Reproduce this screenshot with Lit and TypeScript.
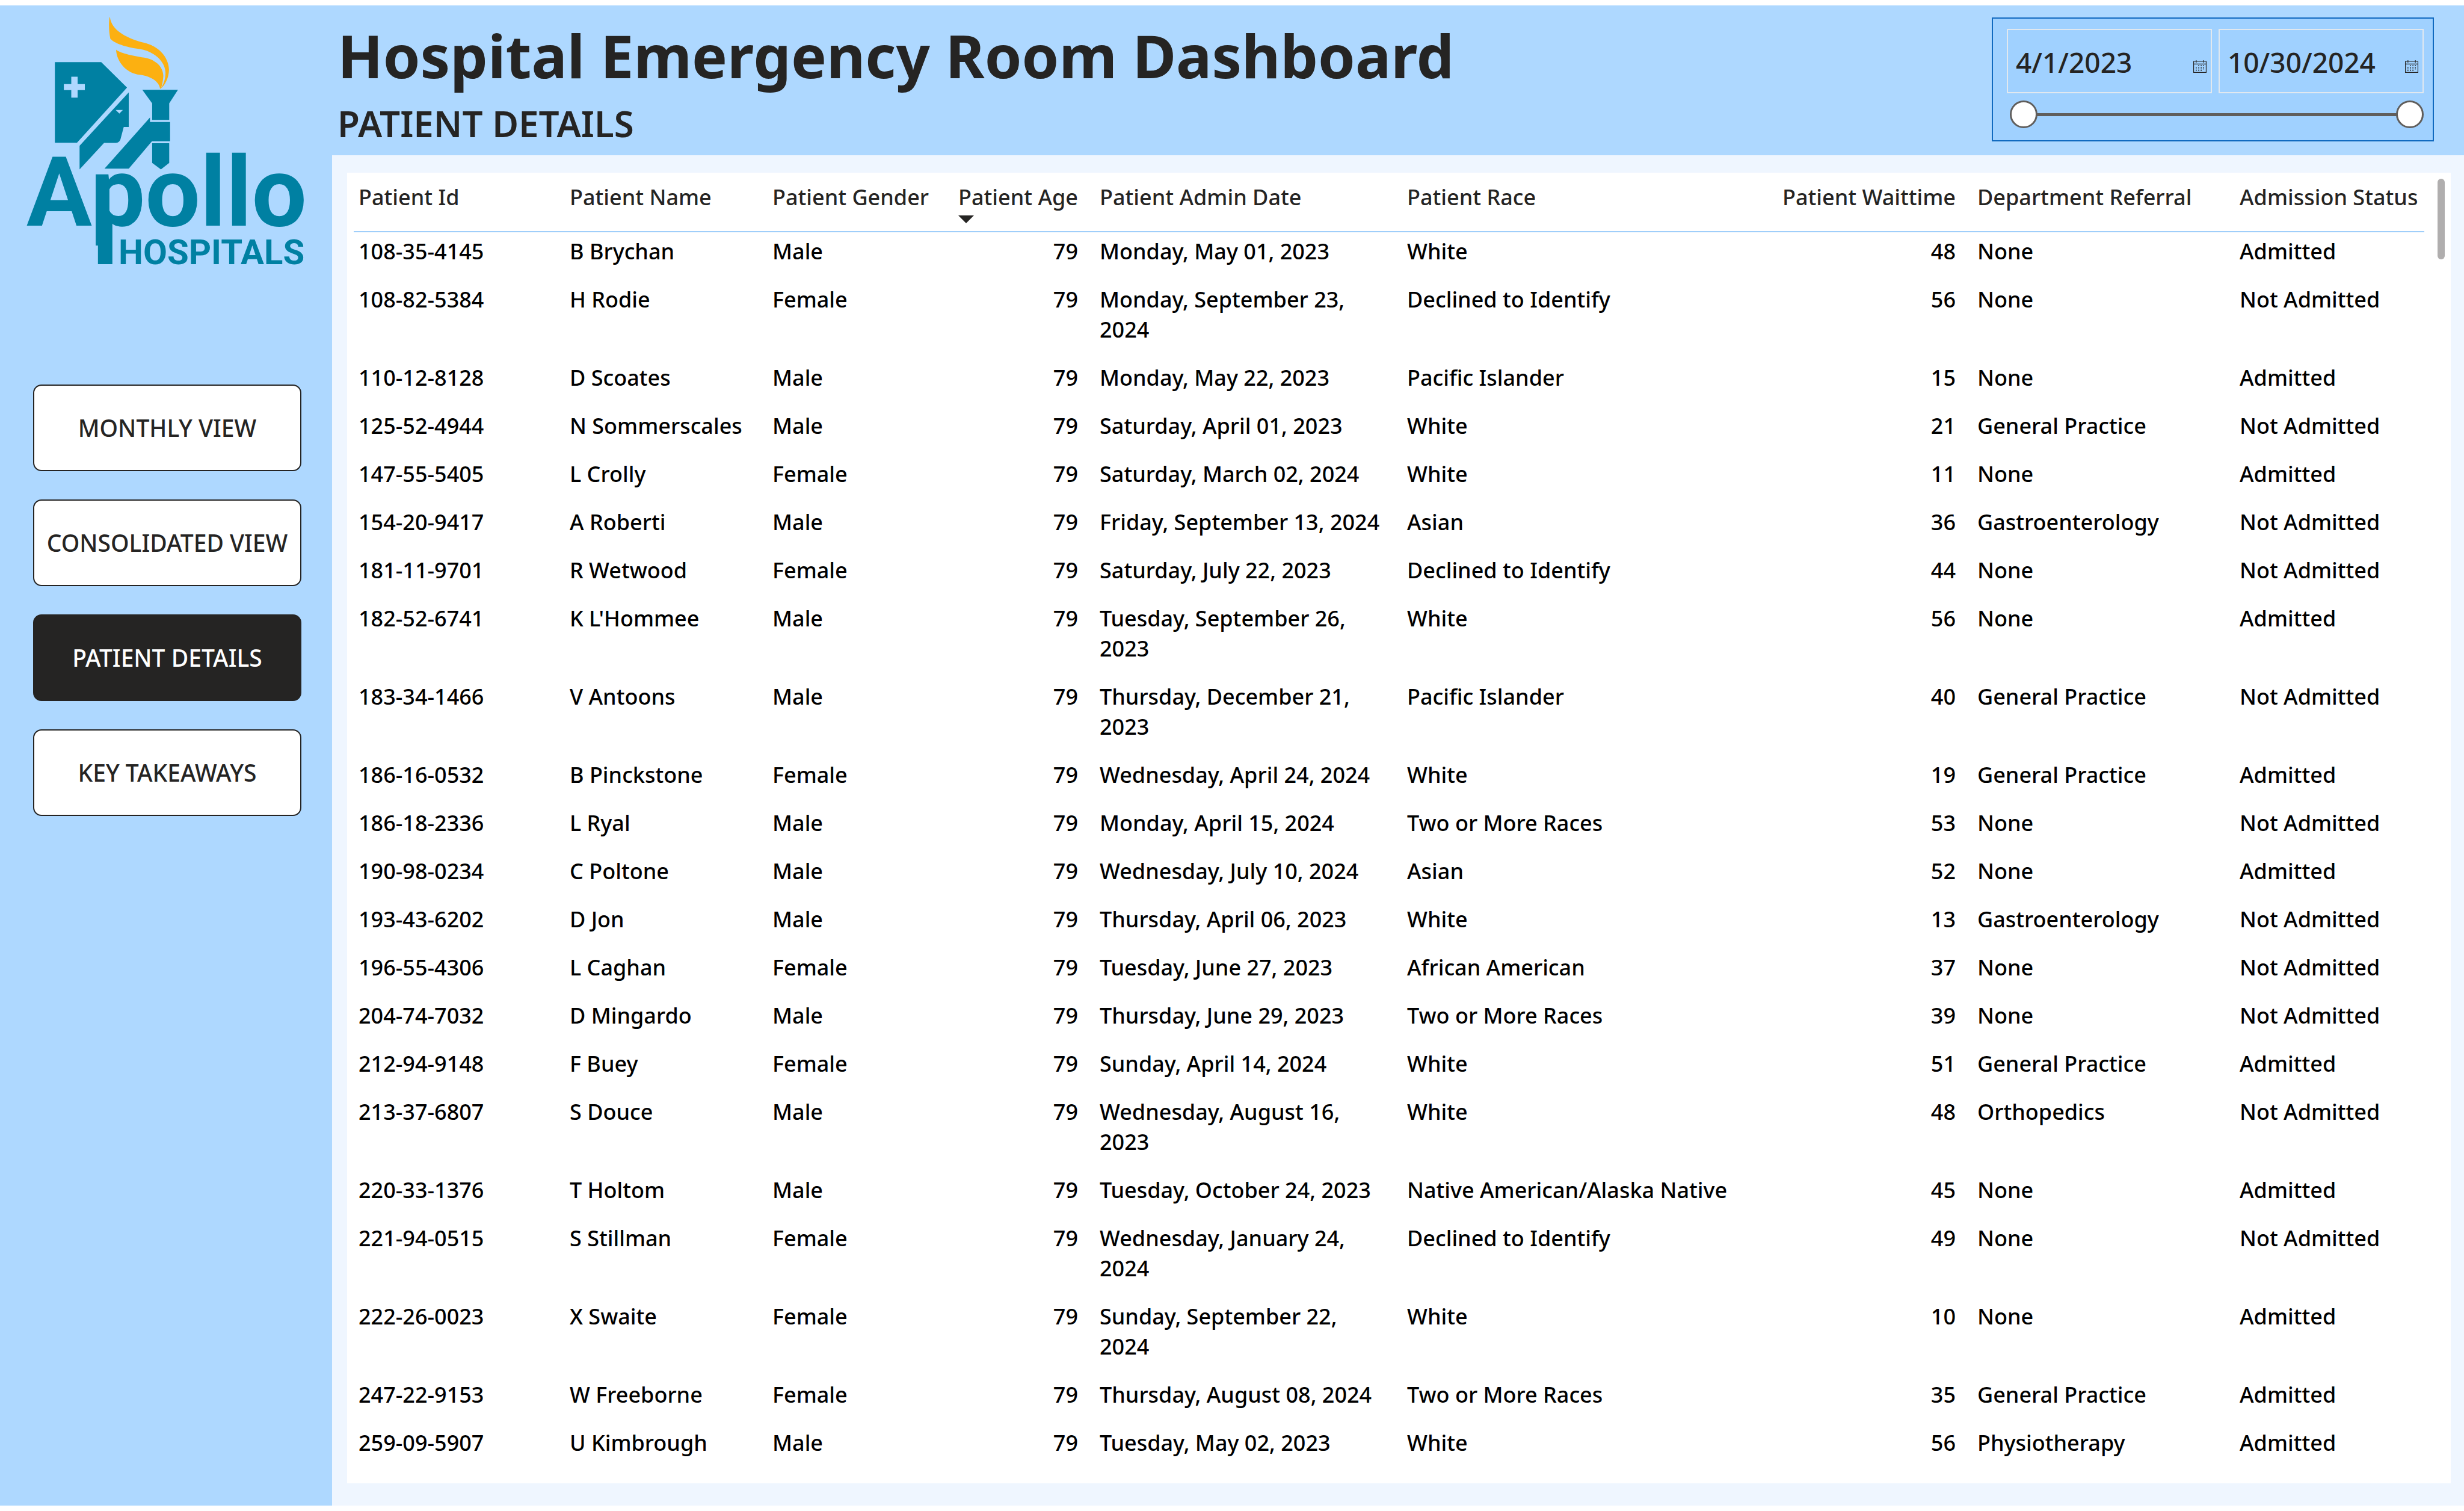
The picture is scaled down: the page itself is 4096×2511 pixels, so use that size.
import { LitElement, html, css, svg } from "lit";
import { customElement, property, state } from "lit/decorators.js";
import { classMap } from "lit/directives/class-map.js";

type Row = [string, string, string, number, string, string, number, string, string];

const NONE = "None";
const GP = "General Practice";
const YES = "Admitted";
const NO = "Not Admitted";

const ROWS: Row[] = [
  ["108-35-4145", "B Brychan", "Male", 79, "Monday, May 01, 2023", "White", 48, NONE, YES],
  ["108-82-5384", "H Rodie", "Female", 79, "Monday, September 23, 2024", "Declined to Identify", 56, NONE, NO],
  ["110-12-8128", "D Scoates", "Male", 79, "Monday, May 22, 2023", "Pacific Islander", 15, NONE, YES],
  ["125-52-4944", "N Sommerscales", "Male", 79, "Saturday, April 01, 2023", "White", 21, GP, NO],
  ["147-55-5405", "L Crolly", "Female", 79, "Saturday, March 02, 2024", "White", 11, NONE, YES],
  ["154-20-9417", "A Roberti", "Male", 79, "Friday, September 13, 2024", "Asian", 36, "Gastroenterology", NO],
  ["181-11-9701", "R Wetwood", "Female", 79, "Saturday, July 22, 2023", "Declined to Identify", 44, NONE, NO],
  ["182-52-6741", "K L'Hommee", "Male", 79, "Tuesday, September 26, 2023", "White", 56, NONE, YES],
  ["183-34-1466", "V Antoons", "Male", 79, "Thursday, December 21, 2023", "Pacific Islander", 40, GP, NO],
  ["186-16-0532", "B Pinckstone", "Female", 79, "Wednesday, April 24, 2024", "White", 19, GP, YES],
  ["186-18-2336", "L Ryal", "Male", 79, "Monday, April 15, 2024", "Two or More Races", 53, NONE, NO],
  ["190-98-0234", "C Poltone", "Male", 79, "Wednesday, July 10, 2024", "Asian", 52, NONE, YES],
  ["193-43-6202", "D Jon", "Male", 79, "Thursday, April 06, 2023", "White", 13, "Gastroenterology", NO],
  ["196-55-4306", "L Caghan", "Female", 79, "Tuesday, June 27, 2023", "African American", 37, NONE, NO],
  ["204-74-7032", "D Mingardo", "Male", 79, "Thursday, June 29, 2023", "Two or More Races", 39, NONE, NO],
  ["212-94-9148", "F Buey", "Female", 79, "Sunday, April 14, 2024", "White", 51, GP, YES],
  ["213-37-6807", "S Douce", "Male", 79, "Wednesday, August 16, 2023", "White", 48, "Orthopedics", NO],
  ["220-33-1376", "T Holtom", "Male", 79, "Tuesday, October 24, 2023", "Native American/Alaska Native", 45, NONE, YES],
  ["221-94-0515", "S Stillman", "Female", 79, "Wednesday, January 24, 2024", "Declined to Identify", 49, NONE, NO],
  ["222-26-0023", "X Swaite", "Female", 79, "Sunday, September 22, 2024", "White", 10, NONE, YES],
  ["247-22-9153", "W Freeborne", "Female", 79, "Thursday, August 08, 2024", "Two or More Races", 35, GP, YES],
  ["259-09-5907", "U Kimbrough", "Male", 79, "Tuesday, May 02, 2023", "White", 56, "Physiotherapy", YES],
];

const COLUMNS = [
  { title: "Patient Id", key: "id" },
  { title: "Patient Name", key: "name" },
  { title: "Patient Gender", key: "gender" },
  { title: "Patient Age", key: "age", numeric: true, sorted: true },
  { title: "Patient Admin Date", key: "date" },
  { title: "Patient Race", key: "race" },
  { title: "Patient Waittime", key: "wait", numeric: true },
  { title: "Department Referral", key: "dept" },
  { title: "Admission Status", key: "status" },
];

/** Brand mark: nurse and torch above the word mark. */
@customElement("brand-logo")
class BrandLogo extends LitElement {
  static styles = css`
    :host {
      display: block;
    }
    .mark {
      display: block;
      width: 100%;
    }
    .teal {
      fill: #0080a2;
      fill-rule: evenodd;
    }
    .flame {
      fill: #fcb011;
    }
    .word {
      font: 700 162px Roboto, "Liberation Sans", sans-serif;
    }
    .sub {
      font: 700 58px Roboto, "Liberation Sans", sans-serif;
    }
  `;
  render() {
    return html`<svg class="mark" viewBox="0 9 552 500" role="img" aria-label="Apollo Hospitals">
      <g transform="scale(.36343 .32708)">
        <path
          class="flame"
          d="M503 88C510 150 570 190 650 215C730 232 772 295 773 355C772 395 755 435 735 450C750 425 757 400 757 370C755 300 690 257 640 249C590 243 530 225 505 198C498 165 497 120 501 88Z"
        />
        <path
          class="flame"
          d="M531 252C545 268 600 282 660 293C720 305 746 345 747 385C746 410 742 430 736 450H732C728 415 690 387 640 380C575 372 533 310 531 252Z"
        />
        <path
          class="teal"
          d="M251 316H463L581 445L352 725H251ZM326 390V427H292V458H326V496H355V458H388V427H355V390Z"
        />
        <path
          class="teal"
          d="M589 469V645H566L551 708Q546 725 530 726H476L364 861V741ZM529 559H562L546 577Z"
        />
        <path class="teal" d="M651 456H814L774 525V609H696V525Z" />
        <path class="teal" d="M686 597V620H778V718H695L589 857H478Z" />
        <path class="teal" d="M696 728H774V828L736 861L696 828Z" />
        <path class="teal" d="M448 1100H514V1342H448Z" />
      </g>
      <text class="teal word" x="44" y="375">Apollo</text>
      <text class="teal sub" x="197" y="439">HOSPITALS</text>
    </svg>`;
  }
}

/** One date box of the slicer, with its calendar button. */
@customElement("date-field")
class DateField extends LitElement {
  @property() value = "";
  @property() label = "";

  static styles = css`
    :host {
      display: block;
      flex: 1;
      min-width: 0;
    }
    .field {
      display: flex;
      align-items: baseline;
      box-sizing: border-box;
      height: 107px;
      padding: 23px 7px 0 13px;
      border: 2px solid #e1e8ef;
    }
    .text {
      flex: 1;
      min-width: 0;
      height: 60px;
      padding: 0;
      border: 0;
      background: none;
      color: #252423;
      font: 500 46px/60px "Noto Sans", sans-serif;
    }
    .pick {
      padding: 0;
      border: 0;
      background: none;
      color: #252423;
      font-size: 16px;
    }
    .icon {
      width: 22px;
      height: 21px;
    }
  `;

  render() {
    const dots = [
      [43, 46], [64, 46], [85, 46],
      [21, 61], [43, 61], [64, 61], [85, 61],
      [21, 75], [43, 75], [64, 75], [85, 75],
      [21, 89], [43, 89], [64, 89],
    ];
    return html`<div class="field">
      <input class="text" type="text" aria-label=${this.label} .value=${this.value} />
      <button class="pick" type="button" aria-label=${"Open calendar, " + this.label}>
        <svg class="icon" viewBox="0 0 114 108" aria-hidden="true">
          <path
            d="M3 10H111V105H3ZM3 33H111M25 0V21M89 0V21"
            fill="none"
            stroke="currentColor"
            stroke-width="6"
          />
          ${dots.map(([x, y]) => svg`<rect x=${x} y=${y - 4} width="8" height="8" fill="currentColor" />`)}
        </svg>
      </button>
    </div>`;
  }
}

/** Date range slicer: two date boxes above a two-handled slider. */
@customElement("date-slicer")
class DateSlicer extends LitElement {
  static styles = css`
    :host {
      display: block;
    }
    .box {
      box-sizing: border-box;
      width: 735px;
      height: 206px;
      padding: 17px 15px 0 23px;
      border: 2px solid #1069bf;
      background: #a0d1ff;
    }
    .dates {
      display: flex;
      gap: 11px;
    }
    .slider {
      position: relative;
      height: 46px;
      margin: 12px 0 0 5px;
    }
    .track {
      position: absolute;
      top: 21px;
      left: 23px;
      right: 23px;
      height: 5px;
      background: #605e5c;
    }
    .range {
      position: absolute;
      inset: 0;
      width: 100%;
      height: 46px;
      margin: 0;
      appearance: none;
      background: none;
      pointer-events: none;
    }
    .range::-webkit-slider-runnable-track {
      height: 46px;
      background: none;
    }
    .range::-webkit-slider-thumb {
      appearance: none;
      box-sizing: border-box;
      width: 46px;
      height: 46px;
      border: 3px solid #605e5c;
      border-radius: 50%;
      background: #fff;
      pointer-events: auto;
    }
  `;

  render() {
    return html`<div class="box">
      <div class="dates">
        <date-field value="4/1/2023" label="Start date"></date-field>
        <date-field value="10/30/2024" label="End date"></date-field>
      </div>
      <div class="slider">
        <div class="track"></div>
        <input class="range" type="range" min="0" max="100" value="0" aria-label="Range start" />
        <input class="range" type="range" min="0" max="100" value="100" aria-label="Range end" />
      </div>
    </div>`;
  }
}

/** Patient table with its scroll thumb. */
@customElement("patient-table")
class PatientTable extends LitElement {
  static styles = css`
    :host {
      display: flex;
      flex: 1;
      gap: 22px;
      padding: 10px 10px 10px 11px;
      background: #fff;
    }
    .table {
      flex: 1;
      min-width: 0;
      margin-top: 6px;
      table-layout: fixed;
      border-collapse: separate;
      border-spacing: 0;
      align-self: flex-start;
      font: 500 36px/50px "Noto Sans", sans-serif;
      color: #000;
    }
    .c-id { width: 351px; }
    .c-name { width: 337px; }
    .c-gender { width: 307px; }
    .c-age { width: 237px; }
    .c-date { width: 511px; }
    .c-wait { width: 325px; }
    .c-dept { width: 436px; }
    .c-status { width: 315px; }
    .head {
      padding: 0 0 0 8px;
      height: 81px;
      border-bottom: 2px solid #9fcefa;
      color: #252423;
      font-weight: 500;
      text-align: left;
      vertical-align: top;
      white-space: nowrap;
    }
    .cell {
      padding: 7px 27px 23px 8px;
      text-align: left;
      vertical-align: top;
    }
    .head.num {
      padding-right: 28px;
    }
    .num {
      padding-right: 28px;
      text-align: right;
    }
    .fit {
      padding-right: 0;
      white-space: nowrap;
    }
    .sort {
      display: inline-flex;
      flex-direction: column;
      align-items: flex-start;
      gap: 5px;
      padding: 0;
      border: 0;
      background: none;
      color: inherit;
      font: inherit;
      vertical-align: top;
    }
    .arrow {
      display: block;
      width: 26px;
      height: 13px;
      fill: #252423;
    }
    .thumb {
      width: 12px;
      height: 134px;
      border-radius: 6px;
      background: #b0aeae;
    }
  `;

  render() {
    return html`<table class="table">
        <colgroup>
          ${COLUMNS.map((c) => html`<col class=${"c-" + c.key} />`)}
        </colgroup>
        <thead>
          <tr>
            ${COLUMNS.map(
              (c) => html`<th scope="col" class=${classMap({ head: true, num: !!c.numeric })} aria-sort=${c.sorted ? "descending" : "none"}>${
                c.sorted
                  ? html`<button class="sort" type="button">
                      <span>${c.title}</span>
                      <svg class="arrow" viewBox="0 0 26 13" aria-hidden="true"><path d="M0 0H26L13 13Z" /></svg>
                    </button>`
                  : c.title
              }</th>`
            )}
          </tr>
        </thead>
        <tbody>
          ${ROWS.map(
            (r) => html`<tr>
              ${r.map(
                (v, i) =>
                  html`<td class=${classMap({ cell: true, num: !!COLUMNS[i].numeric, fit: !COLUMNS[i].numeric && i !== 4 })}>${v}</td>`
              )}
            </tr>`
          )}
        </tbody>
      </table>
      <div class="thumb"></div>`;
  }
}

@customElement("app-root")
class AppRoot extends LitElement {
  @state() private page = "PATIENT DETAILS";

  static styles = css`
    :host {
      display: block;
      background: #fff;
      color: #252423;
      font-family: "Noto Sans", sans-serif;
    }
    .app {
      display: grid;
      grid-template-columns: 552px minmax(0, 1fr);
      box-sizing: border-box;
      min-height: 100vh;
      padding: 9px 0;
    }
    .side {
      background: #aed8ff;
    }
    .nav {
      display: flex;
      flex-direction: column;
      gap: 47px;
      padding: 130px 51px 0 55px;
    }
    .tab {
      height: 144px;
      padding: 0;
      border: 2px solid #252423;
      border-radius: 14px;
      background: #fff;
      color: #252423;
      font: 500 39px/50px "Noto Sans", sans-serif;
      white-space: nowrap;
      cursor: pointer;
    }
    .tab.on {
      background: #252423;
      color: #fff;
    }
    .main {
      display: flex;
      flex-direction: column;
    }
    .top {
      display: flex;
      justify-content: space-between;
      align-items: flex-start;
      padding: 20px 50px 0 9px;
      box-sizing: border-box;
      height: 249px;
      background: #aed8ff;
    }
    .titles {
      display: flex;
      flex-direction: column;
      gap: 13px;
      padding-top: 3px;
    }
    .title {
      margin: 0;
      font-size: 99px;
      line-height: 120px;
      font-weight: 700;
    }
    .subtitle {
      margin: 0;
      font-size: 60px;
      line-height: 80px;
      font-weight: 600;
    }
    .body {
      display: flex;
      flex: 1;
      padding: 29px 22px 37px 25px;
      background: #eff6ff;
    }
  `;

  render() {
    const pages = ["MONTHLY VIEW", "CONSOLIDATED VIEW", "PATIENT DETAILS", "KEY TAKEAWAYS"];
    return html`<div class="app">
      <aside class="side">
        <brand-logo></brand-logo>
        <nav class="nav" aria-label="Pages">
          ${pages.map(
            (p) => html`<button
              type="button"
              class=${classMap({ tab: true, on: p === this.page })}
              @click=${() => (this.page = p)}
            >${p}</button>`
          )}
        </nav>
      </aside>
      <main class="main">
        <header class="top">
          <div class="titles">
            <h1 class="title">Hospital Emergency Room Dashboard</h1>
            <h2 class="subtitle">PATIENT DETAILS</h2>
          </div>
          <date-slicer></date-slicer>
        </header>
        <section class="body">
          <patient-table></patient-table>
        </section>
      </main>
    </div>`;
  }
}
